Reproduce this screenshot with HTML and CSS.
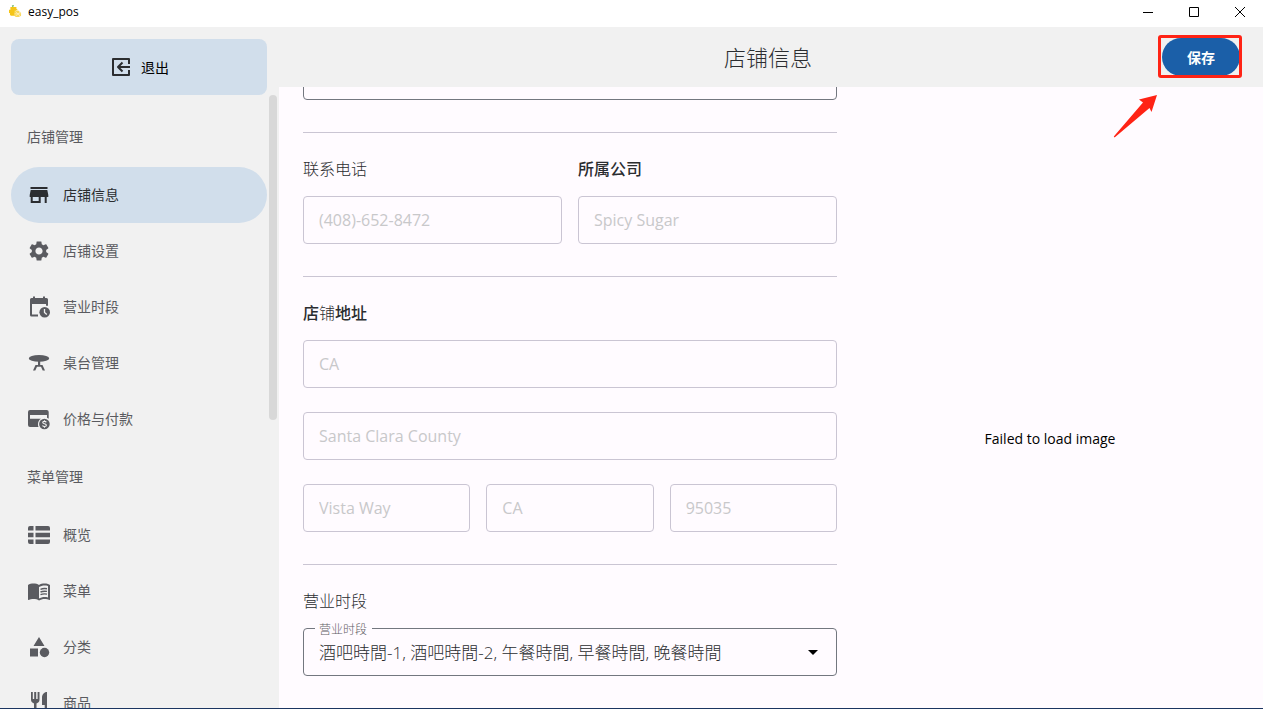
FILE: index.html
```html
<!DOCTYPE html>
<html lang="zh-CN">
<head>
<meta charset="utf-8">
<title>easy_pos</title>
<link rel="stylesheet" href="styles.css">
</head>
<body>
<div class="window">
  <div class="titlebar">
    <svg class="logo" viewBox="0 0 14 14" aria-hidden="true">
      <path d="M3 .8 5 0v1.600L3.500 2z" fill="#4ba639"/>
      <path d="M1.500 2.200h6.500v2h1.500L6.500 7v4.500H2L1 10.500V8.500H0V5h1.500z" fill="#f5c518"/>
      <path d="M6 6h4l3 2.500v3L10.500 13H7L5.500 11z" fill="#f8d75a"/>
      <path d="M7 7l5 5M12 7.500l-5 4.500M6 9.500h6.500" stroke="#fff3c4" stroke-width=".7"/>
    </svg>
    <span class="app-name">easy_pos</span>
    <div class="window-controls">
      <button class="window-button" aria-label="Minimize"><svg viewBox="0 0 10 10"><path d="M0 5.500h10"/></svg></button>
      <button class="window-button" aria-label="Maximize"><svg viewBox="0 0 10 10"><path d="M.5.5h9v9h-9z"/></svg></button>
      <button class="window-button" aria-label="Close"><svg viewBox="0 0 10 10"><path d="M0 0l10 10M10 0 0 10"/></svg></button>
    </div>
  </div>

  <div class="shell">
    <aside class="sidebar">
      <button class="exit">
        <svg class="icon" viewBox="0 0 24 24" fill="none" stroke="currentColor" stroke-width="2" stroke-linejoin="round"><path d="M20 9V4H4v16h16v-5M21 12H9M13.500 7.500 9 12l4.500 4.500"/></svg>
        <span>退出</span>
      </button>
      <div class="nav-area">
        <nav class="nav">
          <h2 class="nav-title">店铺管理</h2>
          <a class="nav-item active" href="#info" aria-current="page">
            <svg class="icon" viewBox="0 0 24 24"><path fill-rule="evenodd" d="M20.500 4h-17v2h17zM21.300 14v-2l-1-5H3.700l-1 5v2h1v6h10v-6h4v6h2v-6zM11.700 18h-6v-4h6z"/></svg>
            <span>店铺信息</span>
          </a>
          <a class="nav-item" href="#settings">
            <svg class="icon" viewBox="0 0 24 24"><path d="M19.140 12.940c.04-.3.06-.61.06-.94 0-.32-.02-.64-.07-.94l2.030-1.580c.18-.14.23-.41.12-.61l-1.920-3.320c-.12-.22-.37-.29-.59-.22l-2.390.96c-.5-.38-1.030-.7-1.620-.94l-.36-2.540c-.04-.24-.24-.41-.48-.41h-3.840c-.24 0-.43.17-.47.41l-.36 2.540c-.59.24-1.130.57-1.620.94l-2.390-.96c-.22-.08-.47 0-.59.22L2.740 8.870c-.12.21-.08.47.12.61l2.030 1.580c-.05.3-.09.63-.09.94s.02.64.07.94l-2.030 1.580c-.18.14-.23.41-.12.61l1.920 3.320c.12.22.37.29.59.22l2.390-.96c.5.38 1.030.7 1.620.94l.36 2.540c.05.24.24.41.48.41h3.840c.24 0 .44-.17.47-.41l.36-2.540c.59-.24 1.130-.56 1.620-.94l2.390.96c.22.08.47 0 .59-.22l1.920-3.320c.12-.22.07-.47-.12-.61zM12 15.600c-1.980 0-3.600-1.620-3.600-3.600s1.620-3.600 3.600-3.600 3.600 1.620 3.600 3.600-1.620 3.600-3.600 3.600z"/></svg>
            <span>店铺设置</span>
          </a>
          <a class="nav-item" href="#hours">
            <svg class="icon" viewBox="0 0 24 24"><path fill-rule="evenodd" d="M5 3h1V1.500h2V3h8V1.500h2V3h1.500a1.500 1.500 0 0 1 1.500 1.500V10.700h-2V9H5v10.500h6v2H4.500A1.500 1.500 0 0 1 3 20V4.500A1.500 1.500 0 0 1 4.500 3z"/><circle cx="17.700" cy="17.300" r="5.300"/><path d="M17.500 14v3.500l2.300 2.100" fill="none" stroke="#f1f1f1" stroke-width="1.300"/></svg>
            <span>营业时段</span>
          </a>
          <a class="nav-item" href="#tables">
            <svg class="icon" viewBox="0 0 24 24"><ellipse cx="12" cy="7.400" rx="10.200" ry="3.400"/><path d="M11 10h2.200v4H15.500l2.500 5.500h-2.300L14 15.800h-4l-1.700 3.700H6L8.500 14H11z"/></svg>
            <span>桌台管理</span>
          </a>
          <a class="nav-item" href="#payment">
            <svg class="icon" viewBox="0 0 24 24"><path fill-rule="evenodd" d="M3 3h16.700a2 2 0 0 1 2 2v6.800a7 7 0 0 0-1.700-1V8H3v3.700h11A6.500 6.500 0 0 0 11 17.500c0 .9.100 1.700.5 2.500H3a2 2 0 0 1-2-2V5a2 2 0 0 1 2-2z"/><circle cx="17.400" cy="17" r="5.300"/><path d="M19.300 15.200c-.5-1-3.600-1.200-3.600.3 0 1.700 3.700.9 3.700 2.800 0 1.500-3.200 1.600-3.900.3M17.500 13.200v1.200M17.500 19.500v1.300" fill="none" stroke="#f1f1f1" stroke-width="1.100"/></svg>
            <span>价格与付款</span>
          </a>
          <h2 class="nav-title">菜单管理</h2>
          <a class="nav-item" href="#overview">
            <svg class="icon" viewBox="0 0 24 24"><path d="M3 3h3.500v4.500H1V5a2 2 0 0 1 2-2zM8.500 3H21a2 2 0 0 1 2 2v2.500H8.500zM1 9.700h5.500v4.500H1zM8.500 9.700H23v4.500H8.500zM1 16.400h5.500v4.500H3a2 2 0 0 1-2-2zM8.500 16.400H23v2.500a2 2 0 0 1-2 2H8.500z"/></svg>
            <span>概览</span>
          </a>
          <a class="nav-item" href="#menus">
            <svg class="icon" viewBox="0 0 24 24"><path fill-rule="evenodd" d="M21 5c-1.110-.35-2.330-.5-3.500-.5-1.950 0-4.050.4-5.500 1.500-1.450-1.100-3.550-1.500-5.500-1.500S2.450 4.900 1 6v15.100c1.500-.7 4-1.100 5.500-1.100 1.950 0 4.050.4 5.500 1.500 1.350-.85 3.800-1.500 5.500-1.500 1.650 0 4.100.4 5.500 1.100V6c-.6-.45-1.250-.75-2-1zm0 13.500c-1.100-.35-2.300-.5-3.500-.5-1.700 0-4.150.65-5.500 1.500V8c1.350-.85 3.800-1.500 5.500-1.500 1.200 0 2.400.15 3.500.5z"/><path d="M13.500 10.300c2-.9 4-1 6.500-.6M13.500 13c2-.9 4-1 6.500-.6M13.500 15.700c2-.9 4-1 6.500-.6" fill="none" stroke="currentColor" stroke-width="1.400"/></svg>
            <span>菜单</span>
          </a>
          <a class="nav-item" href="#categories">
            <svg class="icon" viewBox="0 0 24 24"><path d="M12 2 6.500 11h11zM3 13.500h8v8H3z"/><circle cx="17.500" cy="17.500" r="4.700"/></svg>
            <span>分类</span>
          </a>
          <a class="nav-item" href="#products">
            <svg class="icon" viewBox="0 0 24 24"><path d="M4 1h1.800v7h1.400V1h2v7h1.400V1h1.900v7.500a4 4 0 0 1-3 3.900V22H7v-9.600a4 4 0 0 1-3-3.900zM20 1v21h-2.300v-8H15V6.500C15 3.500 17 1 20 1z"/></svg>
            <span>商品</span>
          </a>
        </nav>
        <div class="scroll-rail"><div class="scroll-thumb"></div></div>
      </div>
    </aside>

    <main class="main">
      <header class="header">
        <h1 class="page-title">店铺信息</h1>
        <div class="save-wrap">
          <button class="save" type="submit" form="shop-form">保存</button>
          <div class="save-frame"></div>
          <svg class="save-arrow" viewBox="0 0 46 44" aria-hidden="true"><path d="M44 1 26 5.500l4 3L.8 42.500l.8.900L36.500 14l2 4z" fill="#ff2315"/></svg>
        </div>
      </header>
      <div class="content">
        <form class="form" id="shop-form">
          <input class="input strong" type="text" aria-label="店铺名称">
          <section class="section columns">
            <div class="group">
              <label class="label" for="phone">联系电话</label>
              <input class="input" id="phone" type="tel" placeholder="(408)-652-8472">
            </div>
            <div class="group">
              <label class="label medium" for="company">所属公司</label>
              <input class="input" id="company" type="text" placeholder="Spicy Sugar">
            </div>
          </section>
          <section class="section">
            <div class="group">
              <label class="label medium" for="address">店<span class="light">铺</span>地址</label>
              <input class="input" id="address" type="text" placeholder="CA">
            </div>
            <input class="input" type="text" placeholder="Santa Clara County" aria-label="County">
            <div class="columns">
              <input class="input" type="text" placeholder="Vista Way" aria-label="Street">
              <input class="input" type="text" placeholder="CA" aria-label="State">
              <input class="input" type="text" placeholder="95035" aria-label="Zip">
            </div>
          </section>
          <section class="section">
            <div class="group">
              <div class="label">营业时段</div>
              <div class="select-field">
                <select class="input strong select" id="hours"><option>酒吧時間-1, 酒吧時間-2, 午餐時間, 早餐時間, 晚餐時間</option></select>
                <label class="float-label" for="hours">营业时段</label>
                <svg class="caret" viewBox="0 0 10 5" aria-hidden="true"><path d="M0 0h10L5 5z"/></svg>
              </div>
            </div>
          </section>
        </form>
        <div class="preview">Failed to load image</div>
      </div>
    </main>
  </div>
</div>
</body>
</html>
```

FILE: styles.css
```css
* {
  box-sizing: border-box;
}

body {
  margin: 0;
  font-family: "Open Sans", "Noto Sans CJK SC", sans-serif;
  font-size: 16px;
  color: #2b2d30;
  background: #fffbff;
}

button,
input,
select {
  font: inherit;
  color: inherit;
}

.window {
  display: flex;
  flex-direction: column;
  height: 100vh;
  border-bottom: 1px solid #1b3561;
  overflow: hidden;
}

.titlebar {
  display: flex;
  align-items: center;
  flex: none;
  height: 27px;
  padding-left: 9px;
  padding-bottom: 4px;
  background: #fff;
  color: #000;
}

.logo {
  width: 13px;
  height: 13px;
}

.app-name {
  margin-left: 6px;
  font-size: 12px;
}

.window-controls {
  display: flex;
  margin-left: auto;
}

.window-button {
  display: grid;
  place-items: center;
  width: 46px;
  height: 23px;
  padding: 0;
  border: 0;
  background: none;
}

.window-button svg {
  width: 10px;
  height: 10px;
  fill: none;
  stroke: #000;
  overflow: visible;
}

.shell {
  display: flex;
  flex: 1;
  min-height: 0;
}

.sidebar {
  display: flex;
  flex-direction: column;
  flex: none;
  width: 279px;
  padding: 12px 2px 0 11px;
  background: #f1f1f1;
}

.exit {
  display: flex;
  align-items: center;
  justify-content: center;
  gap: 8px;
  flex: none;
  width: 256px;
  height: 56px;
  border: 0;
  border-radius: 8px;
  background: #d1deeb;
  color: #000;
  font-size: 14px;
}

.icon {
  flex: none;
  width: 24px;
  height: 24px;
}

.exit .icon {
  color: #2b2d30;
}

.nav-area {
  display: flex;
  justify-content: space-between;
  flex: 1;
  min-height: 0;
}

.nav {
  width: 256px;
  padding-top: 12px;
  overflow: hidden;
}

.nav-title {
  margin: 0;
  padding-left: 16px;
  font-size: 14px;
  font-weight: 400;
  line-height: 60px;
  color: #5a5b60;
}

.nav-item {
  display: flex;
  align-items: center;
  gap: 12px;
  height: 56px;
  padding-left: 16px;
  border-radius: 28px;
  color: #5a5b60;
  font-size: 14px;
  text-decoration: none;
}

.nav-item span {
  padding-bottom: 2px;
}

.nav-item .icon {
  fill: currentColor;
}

.nav-item.active {
  background: #d1deeb;
  color: #2b2d30;
}

.scroll-rail {
  width: 8px;
}

.scroll-thumb {
  height: 53%;
  border-radius: 4px;
  background: #d8d8d8;
}

.main {
  display: flex;
  flex-direction: column;
  flex: 1;
  min-width: 0;
}

.header {
  display: grid;
  grid-template-columns: 1fr auto 1fr;
  align-items: center;
  flex: none;
  height: 60px;
  padding: 0 23px 0 17px;
  background: #f1f1f1;
}

.page-title {
  grid-column: 2;
  margin: 0;
  font-size: 22px;
  font-weight: 300;
  line-height: 32px;
}

.save-wrap {
  position: relative;
  justify-self: end;
}

.save {
  display: block;
  width: 78px;
  height: 38px;
  padding: 0;
  border: 0;
  border-radius: 19px;
  background: #1b5fa8;
  color: #fff;
  font-size: 14px;
  font-weight: 700;
}

.save-frame {
  position: absolute;
  inset: -3px -2px -2px -4px;
  border: 3px solid #ff2315;
  border-radius: 3px;
  pointer-events: none;
}

.save-arrow {
  position: absolute;
  top: 56px;
  right: 81px;
  width: 46px;
  height: 44px;
}

.content {
  display: grid;
  grid-template-columns: 534fr 378fr;
  gap: 24px;
  flex: 1;
  min-height: 0;
  padding: 0 24px;
  overflow: hidden;
}

/* The form is shown scrolled: its first field is partly under the header. */
.form {
  display: flex;
  flex-direction: column;
  gap: 32px;
  margin-top: -35px;
}

.section {
  display: flex;
  flex-direction: column;
  gap: 24px;
  padding-top: 24px;
  border-top: 1px solid #cac5d3;
}

.columns {
  display: flex;
  flex-direction: row;
  gap: 16px;
}

.columns > * {
  flex: 1;
  min-width: 0;
}

.group {
  display: flex;
  flex-direction: column;
  gap: 15px;
}

.label {
  height: 24px;
  line-height: 24px;
  font-weight: 300;
}

.medium {
  font-weight: 500;
}

.light {
  font-weight: 300;
}

.input {
  flex: none;
  width: 100%;
  height: 48px;
  padding: 0 15px;
  border: 1px solid #cac5d3;
  border-radius: 4px;
  background: transparent;
}

.columns > .input {
  flex: 1;
}

.input::placeholder {
  color: #c8c8ca;
  opacity: 1;
}

.strong {
  border-color: #73777f;
}

.select-field {
  position: relative;
}

.select {
  display: block;
  appearance: none;
  font-family: "Open Sans", "Noto Sans CJK TC", sans-serif;
  font-size: 17px;
  font-weight: 300;
}

.float-label {
  position: absolute;
  top: -7px;
  left: 12px;
  padding: 0 5px 0 4px;
  background: #fffbff;
  color: #5f6065;
  font-size: 12px;
  font-weight: 300;
  line-height: 18px;
}

.caret {
  position: absolute;
  top: 22px;
  right: 19px;
  width: 10px;
  height: 5px;
  pointer-events: none;
}

.preview {
  display: grid;
  place-items: center;
  padding-top: 94px;
  padding-bottom: 12px;
  color: #000;
  font-size: 14px;
}
```
